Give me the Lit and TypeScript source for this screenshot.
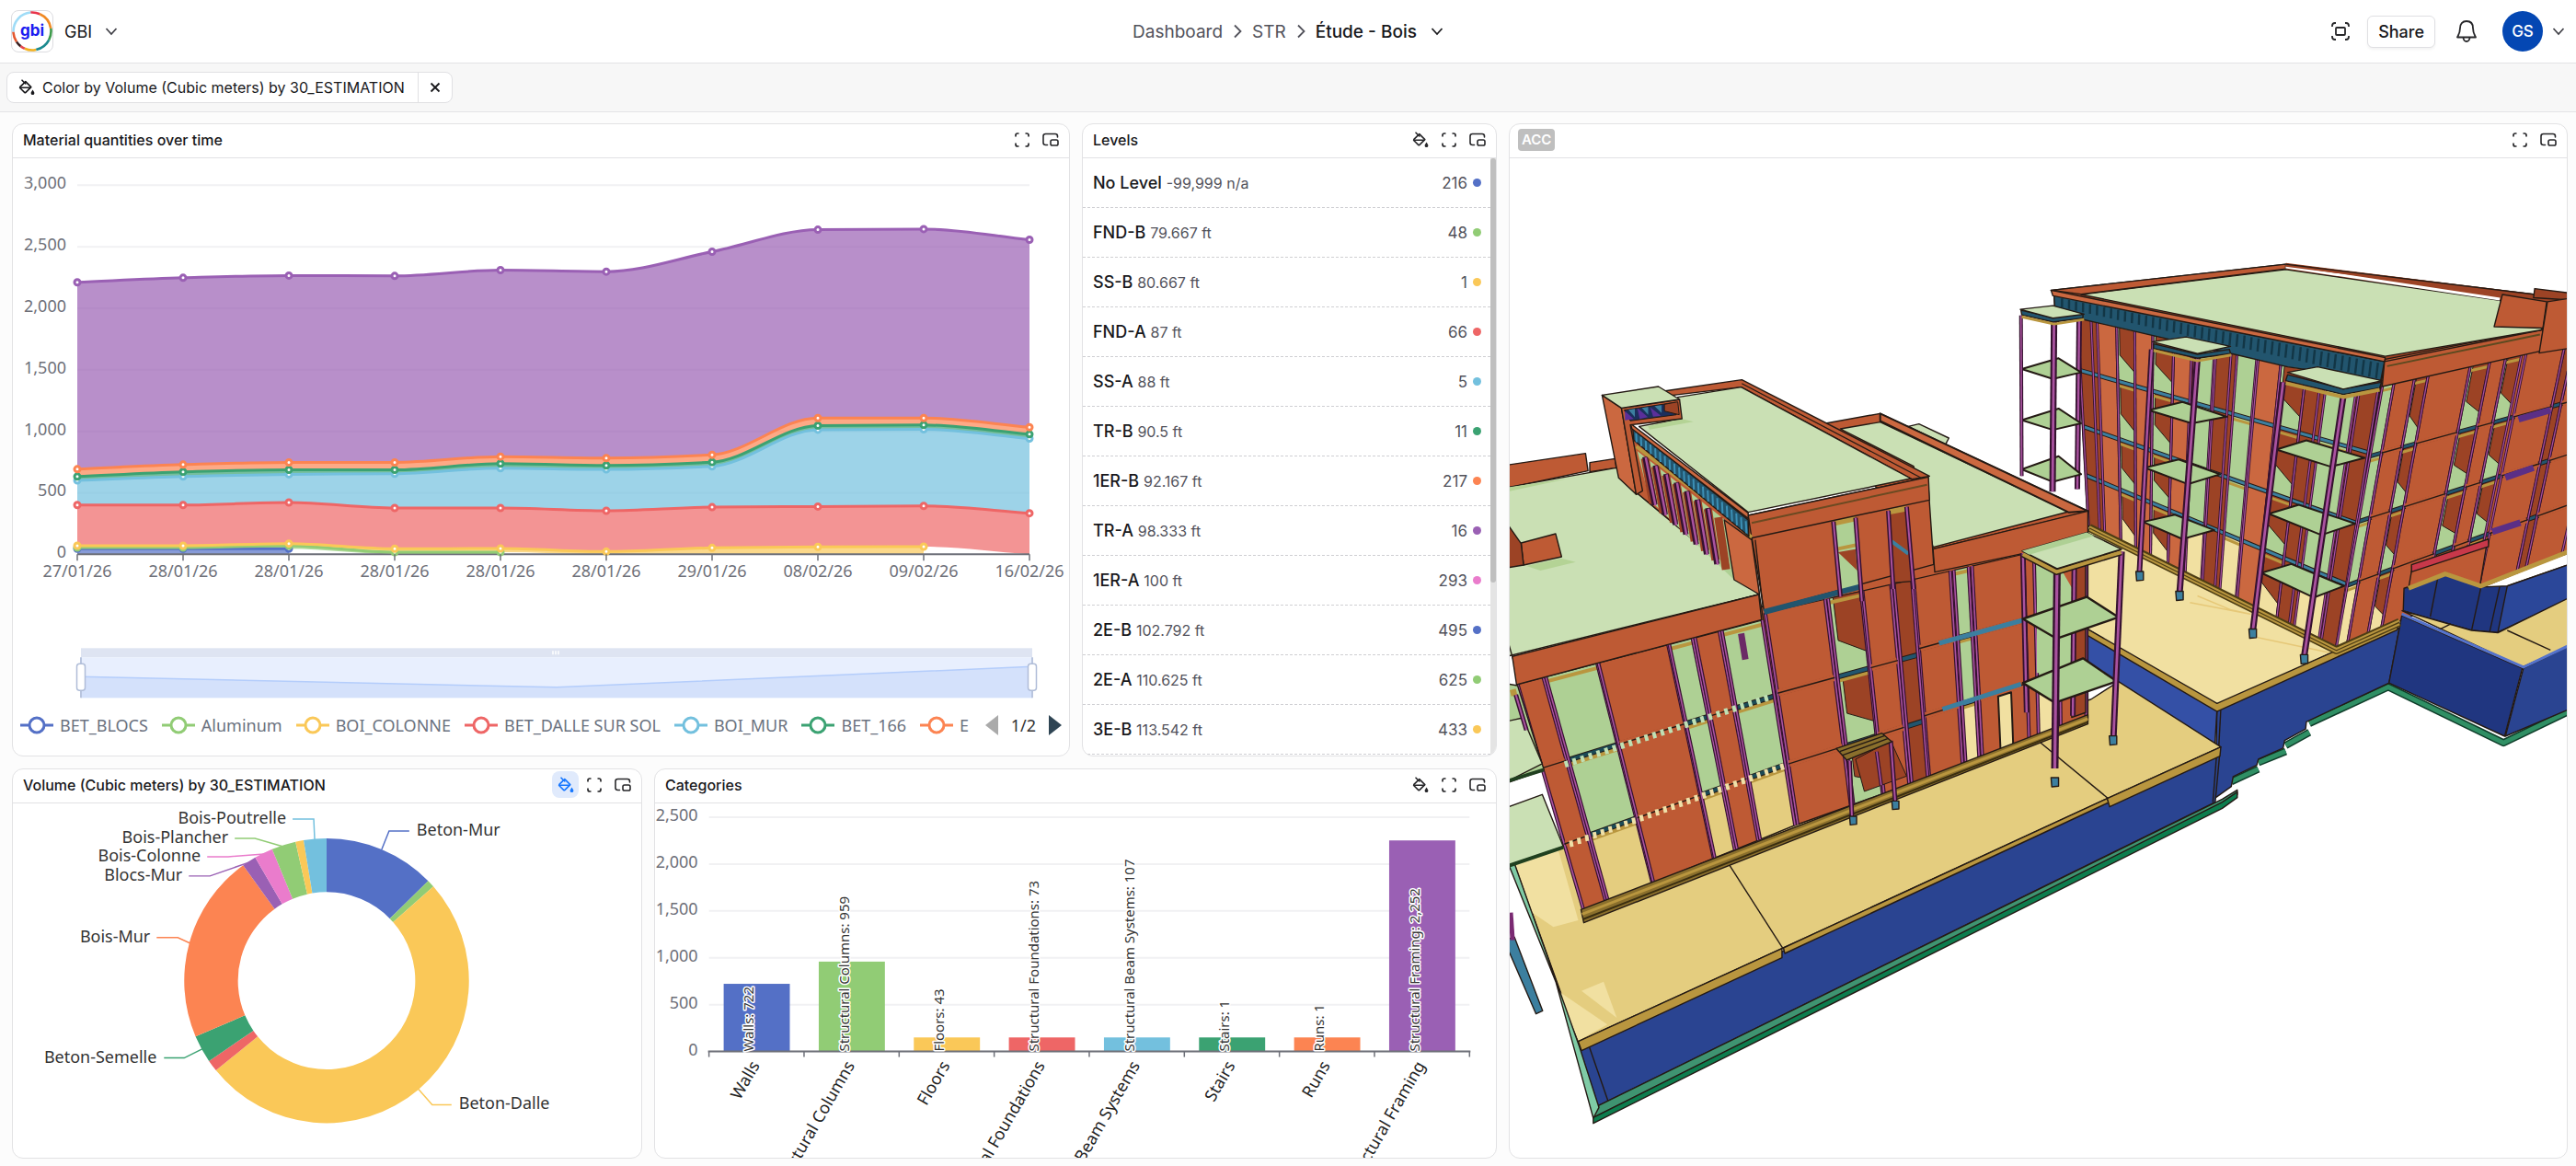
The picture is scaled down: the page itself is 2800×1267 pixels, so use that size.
import { LitElement, html, svg, css, nothing } from "lit";
import { customElement, property } from "lit/decorators.js";

type Pt = [number, number];

const C = {
  blue: "#5470c6",
  green: "#91cc75",
  yellow: "#fac858",
  red: "#ee6666",
  sky: "#73c0de",
  teal: "#3ba272",
  orange: "#fc8452",
  purple: "#9a60b4",
  pink: "#ea7ccc",
};

/* ---------- icons ---------- */

const bucketIcon = html`<svg class="icon" viewBox="0 0 18 18" aria-hidden="true">
  <g fill="none" stroke="currentColor" stroke-width="1.600" stroke-linejoin="round" stroke-linecap="round">
    <path d="M4 1.200 L7.800 5" />
    <path d="M7.800 2.600 L13.800 8.600 L8 14.400 Q7.300 15 6.600 14.400 L1.900 9.800 Q1.300 9.100 1.900 8.400 Z" />
    <path d="M2 9.300 H13.200" />
  </g>
  <path d="M15.500 11.500 C16.700 13.300 17.400 14.200 17.400 15.200 A1.900 1.900 0 0 1 13.600 15.200 C13.600 14.200 14.400 13.300 15.500 11.500 Z" fill="currentColor" />
</svg>`;

const expandIcon = html`<svg class="icon" viewBox="0 0 18 18" aria-hidden="true">
  <path d="M2 5.500 V4 Q2 2 4 2 H5.500 M12.500 2 H14 Q16 2 16 4 V5.500 M16 12.500 V14 Q16 16 14 16 H12.500 M5.500 16 H4 Q2 16 2 14 V12.500" fill="none" stroke="currentColor" stroke-width="1.700" />
</svg>`;

const pipIcon = html`<svg class="icon" viewBox="0 0 18 18" aria-hidden="true">
  <g fill="none" stroke="currentColor" stroke-width="1.600" stroke-linecap="round">
    <path d="M5.500 14.500 H3.500 Q1 14.500 1 12 V5 Q1 2.500 3.500 2.500 H14 Q16.500 2.500 16.500 5 V6" />
    <rect x="9" y="9" width="8" height="6" rx="1.800" />
  </g>
</svg>`;

const chevronDown = html`<svg class="chev" viewBox="0 0 14 14" aria-hidden="true">
  <path d="M1.500 4 L7 10 L12.500 4" fill="none" stroke="currentColor" stroke-width="1.700" />
</svg>`;

const chevronRight = html`<svg class="sep" viewBox="0 0 10 16" aria-hidden="true">
  <path d="M2 1.500 L8.500 8 L2 14.500" fill="none" stroke="currentColor" stroke-width="1.800" />
</svg>`;

/* ---------- panel ---------- */

@customElement("dash-panel")
class DashPanel extends LitElement {
  @property() heading = "";
  @property() badge = "";
  @property({ type: Boolean }) paint = false;
  @property({ type: Boolean }) active = false;

  static styles = css`
    :host {
      display: flex;
      flex-direction: column;
      min-width: 0;
      min-height: 0;
      box-sizing: border-box;
      background: #fff;
      border: 1px solid #e2e2e4;
      border-radius: 12px;
      overflow: hidden;
    }
    .head {
      display: flex;
      align-items: center;
      justify-content: space-between;
      height: 37px;
      box-sizing: border-box;
      padding: 0 6px 2px 11px;
      border-bottom: 1px solid #e2e2e4;
      flex: none;
    }
    .title {
      margin: 0;
      font: 500 16px/20px Inter, sans-serif;
      color: #18181b;
    }
    .badge {
      margin-left: -2px;
      padding: 0 4px;
      border-radius: 4px;
      background: #bfbfbf;
      color: #fff;
      font: 600 15px/24px Inter, sans-serif;
    }
    .tools {
      display: flex;
      gap: 2px;
    }
    .tool {
      display: grid;
      place-items: center;
      width: 29px;
      height: 29px;
      padding: 0;
      border: 0;
      border-radius: 8px;
      background: none;
      color: #27272a;
    }
    .tool.on {
      background: #e0eafc;
      color: #1677ff;
    }
    .icon {
      width: 18px;
      height: 18px;
      display: block;
    }
    .body {
      flex: 1;
      min-height: 0;
      display: flex;
      flex-direction: column;
    }
  `;

  render() {
    return html`
      <header class="head">
        ${this.badge
          ? html`<span class="badge">${this.badge}</span>`
          : html`<h2 class="title">${this.heading}</h2>`}
        <div class="tools">
          ${this.paint
            ? html`<button class="tool ${this.active ? "on" : ""}" aria-label="Color by">${bucketIcon}</button>`
            : nothing}
          <button class="tool" aria-label="Expand">${expandIcon}</button>
          <button class="tool" aria-label="Pop out">${pipIcon}</button>
        </div>
      </header>
      <div class="body"><slot></slot></div>
    `;
  }
}

/* ---------- area chart ---------- */

interface Series {
  name: string;
  color: string;
  top: number[];
}

const SERIES: Series[] = [
  { name: "BET_BLOCS", color: C.blue, top: [45, 45, 45] },
  { name: "Aluminum", color: C.green, top: [55, 55, 70, 17, 17] },
  { name: "BOI_COLONNE", color: C.yellow, top: [70, 70, 87, 45, 47, 22, 52, 60, 62] },
  { name: "BET_DALLE SUR SOL", color: C.red, top: [401, 401, 421, 376, 376, 354, 383, 388, 393, 334] },
  { name: "BOI_MUR", color: C.sky, top: [600, 632, 650, 655, 700, 690, 715, 1013, 1016, 941] },
  { name: "BET_166", color: C.teal, top: [632, 670, 687, 687, 737, 722, 749, 1046, 1051, 976] },
  { name: "E", color: C.orange, top: [692, 729, 747, 747, 794, 782, 809, 1108, 1108, 1033] },
  { name: "BOI_166", color: C.purple, top: [2211, 2248, 2266, 2263, 2310, 2298, 2460, 2639, 2644, 2557] },
];

const DATES = ["27/01/26", "28/01/26", "28/01/26", "28/01/26", "28/01/26", "28/01/26", "29/01/26", "08/02/26", "09/02/26", "16/02/26"];

/* Monotone cubic interpolation; returns only the curve commands after the first point. */
function curve(p: Pt[]): string {
  const n = p.length;
  const d: number[] = [];
  for (let i = 0; i < n - 1; i++) d.push((p[i + 1][1] - p[i][1]) / (p[i + 1][0] - p[i][0]));
  const m = p.map((_, i) => {
    if (i === 0) return d[0];
    if (i === n - 1) return d[n - 2];
    if (d[i - 1] * d[i] <= 0) return 0;
    return (2 * d[i - 1] * d[i]) / (d[i - 1] + d[i]);
  });
  let s = "";
  for (let i = 0; i < n - 1; i++) {
    const h = (p[i + 1][0] - p[i][0]) / 3;
    s += `C${p[i][0] + h},${p[i][1] + h * m[i]} ${p[i + 1][0] - h},${p[i + 1][1] - h * m[i + 1]} ${p[i + 1][0]},${p[i + 1][1]}`;
  }
  return s;
}

@customElement("area-chart")
class AreaChart extends LitElement {
  static styles = css`
    :host {
      flex: 1;
      min-height: 0;
      display: flex;
      flex-direction: column;
      padding-bottom: 16px;
      font-family: "Noto Sans", "Open Sans", sans-serif;
    }
    .plot {
      flex: 1;
      min-height: 0;
      width: 100%;
      display: block;
    }
    .tick {
      font-size: 18px;
      fill: #6e7079;
    }
    .legend {
      display: flex;
      align-items: center;
      height: 34px;
      padding: 0 8px;
      gap: 14px;
    }
    .items {
      flex: 1;
      min-width: 0;
      display: flex;
      gap: 15px;
      overflow: hidden;
    }
    .item {
      flex: none;
      display: flex;
      align-items: center;
      gap: 7px;
      padding: 0;
      border: 0;
      background: none;
      color: #6b7280;
      font: 18px/24px "Noto Sans", sans-serif;
    }
    .mark {
      width: 36px;
      height: 24px;
    }
    .pager {
      display: flex;
      align-items: center;
      gap: 14px;
      font-size: 18px;
      color: #333;
    }
    .page {
      display: block;
      padding: 0;
      border: 0;
      background: none;
      height: 22px;
    }
    .arrow {
      width: 14px;
      height: 22px;
      display: block;
    }
  `;

  render() {
    const x = (i: number) => 70 + i * 115;
    const y = (v: number) => 430 - (v * 401) / 3000;
    const base = (k: number, n: number): number[] =>
      Array.from({ length: n }, (_, i) => (k > 0 ? SERIES[k - 1].top[i] ?? 0 : 0));
    const pts = (vals: number[]): Pt[] => vals.map((v, i) => [x(i), y(v)]);
    return html`
      <svg class="plot" viewBox="0 0 1148 598" role="img" aria-label="Stacked material quantities">
        ${[0, 500, 1000, 1500, 2000, 2500, 3000].map(
          (v) => svg`
            <line x1="70" x2="1105" y1=${y(v)} y2=${y(v)} stroke="#f1f1f3" stroke-width="2" />
            <text class="tick" x="58" y=${y(v) + 4} text-anchor="end">${v.toLocaleString("en-US")}</text>`
        )}
        ${SERIES.map((s, k) => {
          const up = pts(s.top);
          const low = pts(base(k, s.top.length)).reverse();
          const first = `M${up[0][0]},${up[0][1]}`;
          return svg`<path fill=${s.color} opacity="0.7" d="${first}${curve(up)}L${low[0][0]},${low[0][1]}${curve(low)}Z" />`;
        })}
        <line x1="70" x2="1105" y1="430" y2="430" stroke="#6e7079" stroke-width="2" />
        ${SERIES.map((s) => {
          const up = pts(s.top);
          return svg`<path fill="none" stroke=${s.color} stroke-width="3" d="M${up[0][0]},${up[0][1]}${curve(up)}" />
            ${up.map((p) => svg`<circle cx=${p[0]} cy=${p[1]} r="3" fill="#fff" stroke=${s.color} stroke-width="3" />`)}`;
        })}
        ${DATES.map(
          (d, i) => svg`
            <line x1=${x(i)} x2=${x(i)} y1="430" y2="437" stroke="#6e7079" stroke-width="1.500" />
            <text class="tick" x=${x(i)} y="455" text-anchor="middle">${d}</text>`
        )}
        <rect x="74" y="532" width="1034" height="10" fill="#dee4f2" />
        <rect x="74" y="542" width="1034" height="44" fill="#e8effe" />
        <path d="M74 563 L591 574.500 L1108 552 V586 H74 Z" fill="#d4e1fb" />
        <path d="M74 563 L591 574.500 L1108 552" fill="none" stroke="#b4cdfb" stroke-width="1.500" />
        <path d="M587 535 v4 M590 535 v4 M593 535 v4" stroke="#fff" stroke-width="1.500" />
        ${[74, 1108].map(
          (h) => svg`
            <line x1=${h} x2=${h} y1="542" y2="586" stroke="#b9c5de" stroke-width="2" />
            <rect x=${h - 4.5} y="549" width="9" height="29" rx="3" fill="#fff" stroke="#b0bdd8" stroke-width="1.500" />`
        )}
      </svg>
      <div class="legend">
        <div class="items">
          ${SERIES.slice(0, 7).map(
            (s) => html`<button class="item">
              <svg class="mark" viewBox="0 0 36 24" aria-hidden="true">
                <line x1="0" x2="36" y1="12" y2="12" stroke=${s.color} stroke-width="3" />
                <circle cx="18" cy="12" r="8" fill="#fff" stroke=${s.color} stroke-width="3" />
              </svg>${s.name}
            </button>`
          )}
        </div>
        <div class="pager">
          <button class="page" aria-label="Previous">
            <svg class="arrow" viewBox="0 0 14 22"><path d="M14 0 V22 L0 11 Z" fill="#aaa" /></svg>
          </button>
          <span>1/2</span>
          <button class="page" aria-label="Next">
            <svg class="arrow" viewBox="0 0 14 22"><path d="M0 0 V22 L14 11 Z" fill="#2f4554" /></svg>
          </button>
        </div>
      </div>
    `;
  }
}

/* ---------- level list ---------- */

const LEVELS: [string, string, number, string][] = [
  ["No Level", "-99,999 n/a", 216, C.blue],
  ["FND-B", "79.667 ft", 48, C.green],
  ["SS-B", "80.667 ft", 1, C.yellow],
  ["FND-A", "87 ft", 66, C.red],
  ["SS-A", "88 ft", 5, C.sky],
  ["TR-B", "90.5 ft", 11, C.teal],
  ["1ER-B", "92.167 ft", 217, C.orange],
  ["TR-A", "98.333 ft", 16, C.purple],
  ["1ER-A", "100 ft", 293, C.pink],
  ["2E-B", "102.792 ft", 495, C.blue],
  ["2E-A", "110.625 ft", 625, C.green],
  ["3E-B", "113.542 ft", 433, C.yellow],
];

@customElement("level-list")
class LevelList extends LitElement {
  static styles = css`
    :host {
      flex: 1;
      min-height: 0;
      display: flex;
      font-family: Inter, sans-serif;
    }
    .rows {
      flex: 1;
      margin: 0;
      padding: 0;
      list-style: none;
      overflow: hidden;
    }
    .row {
      display: flex;
      align-items: center;
      gap: 6px;
      height: 54px;
      box-sizing: border-box;
      padding: 0 10px 0 11px;
      border-bottom: 1px dashed #cfcfd3;
    }
    .name {
      flex: 1;
      font-size: 18px;
      font-weight: 500;
      color: #18181b;
    }
    .elev {
      font-size: 16px;
      font-weight: 400;
      color: #52525b;
    }
    .count {
      font-size: 17px;
      color: #52525b;
    }
    .dot {
      width: 9px;
      height: 9px;
      border-radius: 50%;
    }
    .track {
      width: 6px;
      background: #e4e4e4;
    }
    .thumb {
      height: 71%;
      background: #bfbfbf;
      border-radius: 3px;
    }
  `;

  render() {
    return html`
      <ul class="rows">
        ${LEVELS.map(
          ([name, elev, count, color]) => html`<li class="row">
            <span class="name">${name} <span class="elev">${elev}</span></span>
            <span class="count">${count}</span>
            <span class="dot" style="background:${color}"></span>
          </li>`
        )}
      </ul>
      <div class="track"><div class="thumb"></div></div>
    `;
  }
}

/* ---------- donut ---------- */

const SLICES: [number, string][] = [
  [45.5, C.blue],
  [48.6, C.green],
  [231, C.yellow],
  [235.7, C.red],
  [247, C.teal],
  [324.1, C.orange],
  [329.9, C.purple],
  [337.5, C.pink],
  [347.4, C.green],
  [350.7, C.yellow],
  [360, C.sky],
];

const CALLOUTS: [string, string, string, number, number, string][] = [
  ["Beton-Mur", C.blue, "401,50 409,30 431,30", 439, 30, "start"],
  ["Beton-Dalle", C.yellow, "441,311 456,328 477,328", 485, 328, "start"],
  ["Beton-Semelle", C.teal, "206,267 186,277 164,277", 156, 277, "end"],
  ["Bois-Mur", C.orange, "192,152 179,146 156,146", 149, 146, "end"],
  ["Blocs-Mur", C.purple, "257,64 214,79 191,79", 184, 79, "end"],
  ["Bois-Colonne", C.pink, "273,55 234,58 211,58", 204, 58, "end"],
  ["Bois-Plancher", C.green, "294,47 263,38 241,38", 234, 38, "end"],
  ["Bois-Poutrelle", C.sky, "328,39 327,17 304,17", 297, 17, "end"],
];

@customElement("donut-chart")
class DonutChart extends LitElement {
  static styles = css`
    :host {
      flex: 1;
      min-height: 0;
      display: flex;
    }
    .plot {
      width: 100%;
      height: 100%;
    }
    .label {
      font: 18px "Noto Sans", sans-serif;
      fill: #333;
    }
  `;

  render() {
    const at = (a: number, r: number) => {
      const t = (a * Math.PI) / 180;
      return `${341 + r * Math.sin(t)} ${193 - r * Math.cos(t)}`;
    };
    return html`<svg class="plot" viewBox="0 0 683 386" role="img" aria-label="Volume by estimation">
      ${SLICES.map(([end, color], i) => {
        const start = i ? SLICES[i - 1][0] : 0;
        const big = end - start > 180 ? 1 : 0;
        return svg`<path fill=${color} d="M${at(start, 155)} A155 155 0 ${big} 1 ${at(end, 155)} L${at(end, 96.5)} A96.5 96.5 0 ${big} 0 ${at(start, 96.5)} Z" />`;
      })}
      ${CALLOUTS.map(
        ([name, color, line, tx, ty, anchor]) => svg`
          <polyline points=${line} fill="none" stroke=${color} stroke-width="1.500" />
          <text class="label" x=${tx} y=${ty + 5} text-anchor=${anchor}>${name}</text>`
      )}
    </svg>`;
  }
}

/* ---------- bar chart ---------- */

const BARS: [string, number, string][] = [
  ["Walls", 722, C.blue],
  ["Structural Columns", 959, C.green],
  ["Floors", 43, C.yellow],
  ["Structural Foundations", 73, C.red],
  ["Structural Beam Systems", 107, C.sky],
  ["Stairs", 1, C.teal],
  ["Runs", 1, C.orange],
  ["Structural Framing", 2252, C.purple],
];

@customElement("bar-chart")
class BarChart extends LitElement {
  static styles = css`
    :host {
      flex: 1;
      min-height: 0;
      display: flex;
    }
    .plot {
      width: 100%;
      height: 100%;
    }
    .tick {
      font: 18px "Noto Sans", sans-serif;
      fill: #6e7079;
    }
    .cat {
      font: 18px "Noto Sans", sans-serif;
      fill: #222;
    }
    .value {
      font: 15px "Noto Sans", sans-serif;
      fill: #333;
      stroke: #fff;
      stroke-width: 3px;
      paint-order: stroke;
      stroke-linejoin: round;
    }
  `;

  render() {
    const y = (v: number) => 270 - (v * 255) / 2500;
    const step = 103.5;
    return html`<svg class="plot" viewBox="0 0 914 386" role="img" aria-label="Elements per category">
      ${[0, 500, 1000, 1500, 2000, 2500].map(
        (v) => svg`
          <line x1="58" x2="886" y1=${y(v)} y2=${y(v)} stroke="#f1f1f3" stroke-width="2" />
          <text class="tick" x="46" y=${y(v) + 4} text-anchor="end">${v.toLocaleString("en-US")}</text>`
      )}
      ${BARS.map(([, v, color], i) => {
        const top = y(Math.max(v, 150));
        return svg`<rect x=${74 + i * step} y=${top} width="72" height=${270 - top} fill=${color} />`;
      })}
      <line x1="57" x2="887" y1="270" y2="270" stroke="#6e7079" stroke-width="2" />
      ${Array.from({ length: 9 }, (_, i) => svg`<line x1=${58 + i * step} x2=${58 + i * step} y1="270" y2="276" stroke="#6e7079" stroke-width="1.500" />`)}
      ${BARS.map(([name, v], i) => {
        const cx = 58 + (i + 0.5) * step;
        return svg`
          <text class="value" transform="translate(${cx - 3} 270) rotate(-90)">${name}: ${v.toLocaleString("en-US")}</text>
          <text class="cat" text-anchor="end" transform="translate(${cx + 4} 285) rotate(-60)">${name}</text>`;
      })}
    </svg>`;
  }
}

/* ---------- 3D model ---------- */

const M = {
  wall: "#be5a34",
  dark: "#9c4325",
  light: "#cb6840",
  roof: "#cae0b4",
  leaf: "#aed094",
  slab: "#e4cd7f",
  pale: "#f1e0a1",
  gold: "#b9963f",
  ochre: "#8a6f2c",
  blue: "#2a4491",
  navy: "#203680",
  beam: "#3c7f9f",
  steel: "#22556e",
  pink: "#a9529f",
  ink: "#241a14",
};

const poly = (fill: string, points: string, w = 1.4) =>
  svg`<polygon class="f" points=${points} fill=${fill} stroke=${M.ink} stroke-width=${w} />`;
const flat = (fill: string, points: string) => svg`<polygon points=${points} fill=${fill} />`;
const line = (points: string, stroke: string = M.ink, w = 1.4) =>
  svg`<polyline class="f" points=${points} fill="none" stroke=${stroke} stroke-width=${w} />`;
const post = (points: string, w = 5) =>
  svg`${line(points, "#35112f", w)}${line(points, M.pink, w * 0.4)}`;

type Quad = [Pt, Pt, Pt, Pt];

/* Bilinear position on a facade: u runs along it, v runs down it. */
function on(q: Quad, u: number, v: number): string {
  const mix = (k: 0 | 1) =>
    (1 - v) * ((1 - u) * q[0][k] + u * q[1][k]) + v * ((1 - u) * q[3][k] + u * q[2][k]);
  return `${mix(0).toFixed(1)},${mix(1).toFixed(1)}`;
}

interface Bay {
  u0: number;
  u1: number;
  fill: string;
  last?: string;
  /* A recess shows the room behind it: a dark wall over a floor slab. */
  recess?: boolean;
}

const bay = (u0: number, u1: number, fill: string, last?: string): Bay => ({ u0, u1, fill, last });
const recess = (u0: number, u1: number, fill: string, last?: string): Bay => ({ u0, u1, fill, last, recess: true });

function facade(q: Quad, floors: number[], bays: Bay[], beam: string, thin = false) {
  const edges = [0, ...floors, 1];
  const solid = (b: Bay) => b.fill === M.wall || b.fill === M.light || b.fill === M.dark;
  const w = thin ? 3 : 4;
  return svg`
    ${bays.map((b) =>
      edges.slice(0, -1).map((v0, i) => {
        const v1 = edges[i + 1];
        const isLast = i === edges.length - 2;
        const fill = isLast && b.last ? b.last : b.fill;
        const h = v1 - v0;
        const um = b.u0 + (b.u1 - b.u0) * 0.15;
        return svg`${poly(fill, [on(q, b.u0, v0), on(q, b.u1, v0), on(q, b.u1, v1), on(q, b.u0, v1)].join(" "), 1.2)}
          ${b.recess
            ? poly(M.dark, [on(q, um, v0), on(q, b.u1, v0), on(q, b.u1, v1 - h * 0.22), on(q, um, v1 - h * 0.45)].join(" "), 1)
            : nothing}
          ${solid(b) ? nothing : line(`${on(q, b.u0, v0 + 0.02)} ${on(q, b.u1, v0 + 0.02)}`, M.gold, w)}`;
      })
    )}
    ${floors.map(
      (v) => svg`${line(`${on(q, 0, v)} ${on(q, 1, v)}`, M.ink, w + 2)}
        ${line(`${on(q, 0, v)} ${on(q, 1, v)}`, beam, w)}`
    )}
    ${bays.map((b) => svg`${post(`${on(q, b.u0, 0)} ${on(q, b.u0, 1)}`, w)}${post(`${on(q, b.u1, 0)} ${on(q, b.u1, 1)}`, w)}`)}
    ${floors.map((v) =>
      bays.map((b) =>
        b.fill === M.wall
          ? svg`${line(`${on(q, b.u0 + 0.006, v)} ${on(q, b.u1 - 0.006, v)}`, M.wall, w + 3)}${line(`${on(q, b.u0, v)} ${on(q, b.u1, v)}`, M.ink, 1.4)}`
          : nothing
      )
    )}
  `;
}

const balcony = (slabs: string[]) => slabs.map((s) => poly(M.leaf, s, 2));
const foot = (x: number, y: number) =>
  poly(M.beam, `${x - 10},${y - 14} ${x + 10},${y - 14} ${x + 10},${y + 12} ${x - 8},${y + 14}`, 1.4);

const EAST: Quad = [[240, 225], [1045, 430], [930, 1240], [270, 870]];
const NORTH: Quad = [[1053, 445], [1660, 290], [1530, 960], [930, 1240]];
const FRONT_A: Quad = [[25, 1030], [720, 822], [813, 1490], [213, 1770]];
const FRONT_B: Quad = [[720, 800], [1145, 690], [1190, 1335], [813, 1490]];
const FRONT_C: Quad = [[1145, 690], [1640, 560], [1640, 1150], [1190, 1335]];

function ribs(a: Pt, b: Pt, c: Pt, d: Pt, n: number, stroke: string, w: number) {
  return Array.from({ length: n }, (_, i) => {
    const t = (i + 0.5) / n;
    const p = `${a[0] + (b[0] - a[0]) * t},${a[1] + (b[1] - a[1]) * t}`;
    const r = `${c[0] + (d[0] - c[0]) * t},${c[1] + (d[1] - c[1]) * t}`;
    return line(`${p} ${r}`, stroke, w);
  });
}

const footing = (points: string) => svg`${line(points, "#0f3d2a", 8)}${line(points, "#2f8f64", 5)}`;

const farBuilding = svg`<g transform="translate(2160 260) scale(0.40816 0.35714)">
  ${footing("1560,1430 1375,1532 1068,1362 858,1473")}
  ${footing("795,1540 858,1500")}
  ${footing("722,1592 795,1558")}
  ${footing("650,1650 722,1612")}
  ${poly(M.blue, "612,1430 1098,1182 1070,1350 850,1468 848,1490 792,1525 788,1548 722,1582 718,1600 655,1635 650,1665 607,1700")}
  ${poly("#3450a6", "255,1190 612,1430 606,1545 345,1352 255,1290")}
  ${line("622,1432 616,1560")}
  ${poly(M.pale, "270,870 930,1250 1095,1165 612,1418 250,1175 200,980")}
  ${line("540,1105 700,1140 650,1128 560,1085", "#e6c878", 1.5)}
  ${line("720,1212 930,1262", "#e6c878", 1.5)}
  ${poly(M.gold, "255,1178 612,1412 1095,1168 1092,1188 612,1437 255,1197")}
  ${poly(M.dark, "170,155 795,76 1545,180 1545,300 1060,375")}
  ${poly(M.wall, "178,170 1060,365 930,1250 268,872 240,300 180,210")}
  ${poly(M.wall, "1060,365 1480,272 1640,230 1560,950 1310,1055 1110,1065 1098,1160 930,1250")}
  ${flat(M.dark, "240,235 1045,440 930,1240 270,870")}
  ${facade(
    EAST,
    [0.27, 0.535, 0.765],
    [
      bay(0, 0.045, M.dark),
      bay(0.065, 0.13, M.light),
      recess(0.13, 0.19, M.leaf, M.pale),
      bay(0.19, 0.25, M.light),
      recess(0.25, 0.32, M.leaf, M.pale),
      bay(0.32, 0.38, M.light),
      bay(0.39, 0.455, M.leaf, M.pale),
      bay(0.46, 0.51, M.dark),
      bay(0.53, 0.595, M.leaf, M.pale),
      bay(0.6, 0.675, M.light),
      recess(0.675, 0.76, M.leaf, M.pale),
      bay(0.76, 0.81, M.dark),
      bay(0.83, 0.93, M.leaf, M.pale),
      bay(0.94, 1, M.dark),
    ],
    M.beam,
    true
  )}
  ${facade(
    NORTH,
    [0.27, 0.52, 0.765],
    [
      bay(0, 0.05, M.leaf, M.pale),
      bay(0.05, 0.14, M.wall),
      recess(0.14, 0.2, M.leaf, M.pale),
      bay(0.2, 0.385, M.wall),
      recess(0.385, 0.47, M.leaf),
      bay(0.47, 0.54, M.wall),
      recess(0.54, 0.61, M.leaf),
      bay(0.63, 0.8, M.wall),
      bay(0.8, 0.84, M.dark),
      bay(0.84, 1, M.wall),
    ],
    M.steel,
    true
  )}
  ${line("1415,548 1500,520", "#5b2f86", 7)}
  ${line("1380,725 1455,695", "#5b2f86", 7)}
  ${line("1345,890 1420,862", "#5b2f86", 7)}
  ${poly(M.steel, "178,170 1058,372 1048,430 800,388 640,345 240,240 180,205")}
  ${ribs([190, 178], [1050, 378], [190, 205], [1045, 425], 46, "#123646", 2.4)}
  ${poly(M.wall, "1058,372 1480,275 1475,340 1052,448")}
  ${line("1065,386 1472,290", "#5c4a20", 2)}
  ${poly(M.light, "170,155 1060,360 1058,372 175,172")}
  ${poly(M.roof, "250,168 795,92 1365,186 1480,275 1060,356")}
  ${poly(M.wall, "172,155 795,76 795,90 250,167")}
  ${line("795,84 1365,182", "#fff", 3)}
  ${line("795,78 1460,172", M.dark, 4)}
  ${line("795,76 1460,168")}
  ${poly(M.wall, "1372,168 1490,190 1480,270 1350,266")}
  ${poly(M.dark, "1458,150 1560,165 1560,185 1455,178")}
  ${poly(M.wall, "1492,190 1560,178 1560,330 1470,346")}
  ${poly(M.navy, "1110,1062 1220,1022 1315,1058 1385,1055 1560,985 1560,1090 1360,1197 1290,1190 1108,1130")}
  ${poly("#2b4799", "1385,1055 1560,985 1560,1090 1360,1195")}
  ${line("1200,1030 1180,1148")}${line("1315,1058 1290,1190")}${line("1365,1056 1338,1195")}
  ${poly(M.wall, "1130,1010 1330,930 1312,1055 1222,1015 1122,1062")}
  ${poly("#c8384a", "1130,990 1335,912 1335,935 1130,1012")}
  ${line("1122,1062 1220,1018 1315,1055 1560,945", M.gold, 5)}
  ${poly(M.slab, "1105,1130 1290,1190 1360,1197 1560,1085 1560,1232 1425,1302")}
  ${line("1385,1190 1500,1250")}${line("1200,1190 1235,1170")}
  ${poly(M.navy, "1104,1145 1425,1305 1378,1512 1070,1350")}
  ${poly(M.blue, "1428,1305 1560,1232 1560,1425 1380,1512")}
  ${line("1104,1140 1428,1302 1560,1230", "#5573cc", 3)}
  ${line("272,878 930,1250 1098,1165", "#4d3d14", 9)}
  ${line("272,874 930,1246 1098,1160", M.gold, 2)}
  ${line("272,884 930,1256 1098,1171", M.gold, 2)}

  ${flat("#ffffff", "92,245 240,245 240,740 92,700")}
  ${post("245,240 240,760", 6)}
  ${balcony(["92,395 190,362 250,405 175,425", "92,550 190,515 250,560 175,580", "92,700 190,660 250,715 175,738"])}
  ${post("90,232 92,720", 4)}${post("178,250 174,768", 7)}
  ${poly(M.steel, "90,216 175,238 255,228 255,240 175,252 92,230")}
  ${line("92,236 178,258 258,244", M.gold, 3)}
  ${poly(M.roof, "88,213 175,202 258,228 175,240")}

  ${balcony(["430,520 520,495 638,540 545,560", "420,695 510,670 620,715 535,745", "415,860 500,838 605,885 520,912"])}
  ${post("438,335 405,1020", 6)}${post("560,360 512,1080", 7)}
  ${poly(M.steel, "443,318 560,350 645,335 648,348 560,362 443,332")}
  ${line("443,338 560,370 650,352", M.gold, 3)}
  ${poly(M.roof, "440,312 530,297 648,326 560,348")}
  ${foot(406, 1025)}${foot(512, 1085)}

  ${balcony(["770,640 850,612 1005,665 915,692", "750,835 830,808 980,865 890,900", "730,1015 810,988 950,1055 870,1090"])}
  ${post("788,435 707,1195", 7)}${post("948,480 844,1270", 7)}
  ${poly(M.steel, "800,412 948,455 1050,435 1045,452 948,472 795,430")}
  ${line("795,438 948,480 1045,458", M.gold, 4)}
  ${poly(M.roof, "800,405 880,388 1052,430 948,456")}
  ${foot(707, 1200)}${foot(844, 1278)}
</g>`;

const terrace = svg`<g transform="translate(1640 800) scale(0.5102 0.33333)">
  ${poly(M.blue, "150,1015 585,700 1275,215 1515,50 1505,215 190,1205")}
  ${line("1508,60 1500,215")}${line("172,1015 212,1192")}
  ${poly("#3f9471", "190,1205 1520,205 1552,175 1552,190 1520,222 180,1243")}
  ${poly("#0d7d4e", "180,1243 1520,215 1552,182 1552,200 1520,235 180,1262")}
  ${poly(M.slab, "12,415 110,360 1240,-120 1299,-178 1517,35 1275,203 585,690 148,995")}
  ${flat(M.pale, "14,418 105,368 148,600 95,622 50,575")}
  ${flat(M.pale, "105,830 148,992 210,940")}
  ${flat(M.pale, "155,830 202,800 230,918")}
  ${poly(M.gold, "148,995 582,692 582,722 155,1025")}
  ${poly(M.gold, "585,690 1275,203 1278,216 588,708")}
  ${poly(M.gold, "1275,203 1517,35 1515,65 1280,230")}
  ${line("468,415 584,692")}${line("1128,15 1277,203")}
  ${poly("#7fcba6", "0,420 12,415 150,1010 192,1210 180,1245 100,800")}
  ${poly(M.beam, "0,660 12,655 72,895 58,905 0,700")}
  ${line("4,575 8,665", "#7a2a72", 5)}
</g>`;

const nearBuilding = svg`<g transform="translate(1640 400) scale(0.38265 0.33333)">
  ${poly(M.roof, "1135,190 1165,182 1250,228 1240,250")}
  ${poly(M.wall, "900,180 1055,148 1645,466 1640,480 1205,600 900,200")}
  ${poly(M.roof, "942,198 1055,176 1590,468 1205,584 1150,320")}
  ${poly(M.light, "1055,148 1645,466 1590,470 1055,172", 2)}
  ${poly(M.wall, "1150,560 1205,590 1645,468 1645,1150 1190,1340 813,1490 715,780")}
  ${facade(
    FRONT_C,
    [0.35, 0.69],
    [
      bay(0.01, 0.22, M.wall),
      bay(0.24, 0.325, M.leaf, M.pale),
      bay(0.345, 0.64, M.wall),
      bay(0.7, 0.82, M.leaf, M.pale),
      bay(0.84, 1, M.wall),
    ],
    M.beam
  )}
  ${poly(M.pale, [on(FRONT_C, 0.46, 0.71), on(FRONT_C, 0.54, 0.71), on(FRONT_C, 0.54, 0.99), on(FRONT_C, 0.46, 0.99)].join(" "), 2)}
  ${line("1222,897 1460,822", M.beam, 5)}${line("1232,1112 1455,1030", M.beam, 5)}
  ${poly(M.wall, "1205,590 1645,466 1645,560 1210,665")}

  ${facade(
    FRONT_B,
    [0.38, 0.715],
    [
      bay(0.02, 0.42, M.wall),
      recess(0.44, 0.66, M.leaf),
      bay(0.67, 0.86, M.wall),
      bay(0.88, 1, M.dark),
    ],
    M.steel
  )}

  ${poly(M.wall, "680,480 1190,355 1207,640 725,790")}
  ${poly(M.leaf, "925,500 985,487 1000,715 940,735")}
  ${flat(M.dark, "935,600 985,590 990,660")}
  ${line("925,505 985,490", M.gold, 6)}${line("932,590 985,577", M.gold, 4)}
  ${poly(M.dark, "1082,465 1130,455 1145,695 1090,700")}
  ${line("1082,468 1130,458", M.gold, 6)}
  ${line("1088,565 1135,605", M.beam, 4)}
  ${line("725,795 1000,712", M.steel, 6)}
  ${line("700,560 722,780")}
  ${post("922,500 942,745", 5)}${post("985,488 1003,760", 5)}${post("1078,465 1092,720", 5)}${post("1130,452 1150,720", 5)}
  ${poly(M.wall, "680,480 1192,355 1195,430 685,555")}
  ${line("690,505 1188,380", "#6b4a22", 2)}

  ${poly(M.wall, "0,390 0,315 218,278 225,335")}
  ${poly(M.wall, "230,308 302,295 305,325 230,338")}
  ${poly(M.roof, "0,388 305,325 365,408 710,738 0,938")}
  ${flat("#b4d395", "0,388 260,345 160,362 0,402")}
  ${poly(M.wall, "35,570 133,540 150,615 42,642")}
  ${poly(M.dark, "0,515 35,572 42,642 0,650")}
  ${flat("#b4d395", "50,645 150,620 190,632 90,660")}

  ${poly(M.wall, "340,185 680,480 690,555 712,738 365,408")}
  ${flat(M.leaf, "365,270 620,500 640,690 400,430")}
  ${ribs([372, 280], [610, 500], [395, 425], [632, 672], 8, M.dark, 9)}
  ${ribs([372, 275], [580, 470], [400, 430], [606, 655], 7, "#35112f", 6)}
  ${ribs([374, 277], [582, 472], [402, 432], [608, 657], 7, M.pink, 2.5)}
  ${line("362,255 620,480 690,552", M.gold, 4)}
  ${poly(M.steel, "352,195 680,495 682,548 355,235")}
  ${ribs([355, 205], [680, 505], [356, 235], [682, 545], 24, "#3c8fb5", 2)}
  ${poly(M.light, "612,495 690,560 712,738 640,690")}
  ${poly(M.light, "345,180 680,472 680,490 350,198")}
  ${poly(M.wall, "440,75 662,38 1195,352 1145,362 660,62 440,92")}
  ${line("662,50 1170,357", M.ink, 1.2)}
  ${poly(M.roof, "370,190 490,165 480,95 660,62 1142,360 680,470")}
  ${flat("#b4d395", "395,190 490,165 525,175 400,200")}
  ${poly(M.light, "265,88 320,130 362,412 312,358")}
  ${poly(M.wall, "320,130 485,102 492,165 345,185 380,400 362,412")}
  ${poly("#1c2f5c", "328,137 472,112 476,152 345,172", 1)}
  ${flat("#5b2f9a", "330,170 330,140 355,166")}${flat("#5b2f9a", "365,130 395,160 372,166")}${flat("#5b2f9a", "402,128 432,155 410,158")}
  ${flat(M.beam, "340,136 358,133 358,160")}${flat(M.beam, "378,130 396,127 396,152")}${flat(M.beam, "414,124 434,121 434,146")}
  ${poly(M.dark, "442,118 480,110 484,152 442,140", 1)}
  ${poly(M.roof, "265,88 425,60 485,102 320,130")}

  ${poly(M.wall, "10,940 712,738 812,1490 213,1775")}
  ${facade(
    FRONT_A,
    [0.37, 0.705],
    [
      bay(0, 0.105, M.wall),
      bay(0.115, 0.325, M.leaf, M.slab),
      bay(0.33, 0.615, M.wall),
      bay(0.62, 0.715, M.leaf, M.slab),
      bay(0.725, 0.825, M.wall),
      bay(0.835, 1, M.leaf, M.slab),
    ],
    "#1b4a56"
  )}
  ${ribs([150, 1285], [740, 1062], [155, 1305], [745, 1082], 26, "#bfe0b4", 4)}
  ${ribs([165, 1545], [785, 1285], [168, 1565], [790, 1305], 28, "#efe0a8", 4)}
  ${line("660,865 672,950", "#6b2a66", 7)}
  ${poly(M.wall, "10,940 710,738 718,820 22,1032")}
  ${line("10,940 0,900")}
  ${poly(M.leaf, "0,1030 25,1035 100,1310 0,1350")}
  ${poly(M.roof, "0,1150 40,1140 95,1290 0,1345")}
  ${poly(M.roof, "0,1430 95,1390 155,1560 0,1620")}
  ${line("0,1345 98,1310", "#20401f", 4)}${line("0,1622 155,1562", "#20401f", 4)}
  ${line("5,1060 22,1055", M.gold, 7)}
  ${post("20,1065 50,1180", 5)}

  ${poly(M.ochre, "205,1765 1645,1130 1645,1160 213,1808")}
  ${line("208,1780 1645,1143", M.gold, 3)}${line("210,1797 1645,1154", "#3a2e10", 2)}

  ${poly(M.dark, "985,1275 1085,1215 1130,1330 1010,1380", 1)}
  ${post("968,1280 975,1470", 5)}${post("1085,1215 1098,1420", 5)}${post("1045,1250 1058,1360", 4)}
  ${poly(M.ochre, "930,1240 1060,1190 1088,1218 960,1278")}
  ${line("940,1250 1068,1198")}${line("948,1262 1076,1208")}
  ${foot(978, 1475)}${foot(1098, 1425)}
</g>`;

const frontTower = svg`<g transform="translate(2160 260) scale(0.40816 0.35714)">
  ${flat(M.leaf, "132,1005 195,1000 225,1060 225,1300 132,1320")}
  ${poly(M.dark, "232,990 262,975 262,1440 225,1455")}
  ${post("95,955 105,1440", 6)}${post("232,990 228,1450", 6)}
  ${poly(M.leaf, "95,1155 265,1088 350,1150 185,1215", 2.4)}
  ${poly(M.leaf, "95,1350 255,1275 345,1345 180,1410", 2.4)}
  ${post("358,950 336,1520", 7)}${post("186,1005 180,1610", 8)}
  ${line("95,958 185,1012 357,952", M.ink, 7)}${line("95,958 185,1012 357,952", M.gold, 4)}
  ${poly(M.roof, "93,948 265,892 358,943 186,1002")}
  ${flat(M.leaf, "93,948 265,892 285,902 112,960")}
  ${foot(335, 1525)}${foot(180, 1652)}
</g>`;

@customElement("model-view")
class ModelView extends LitElement {
  static styles = css`
    :host {
      flex: 1;
      min-height: 0;
      display: flex;
    }
    .scene {
      width: 100%;
      height: 100%;
    }
    .f {
      vector-effect: non-scaling-stroke;
      stroke-linejoin: round;
    }
  `;

  render() {
    return html`<svg class="scene" viewBox="1641 172 1149 1086" preserveAspectRatio="xMidYMid slice" role="img" aria-label="Building model">
      ${farBuilding} ${terrace} ${nearBuilding} ${frontTower}
    </svg>`;
  }
}

/* ---------- page ---------- */

@customElement("app-root")
class AppRoot extends LitElement {
  static styles = css`
    :host {
      display: flex;
      flex-direction: column;
      height: 100vh;
      background: #fcfcfc;
      font-family: Inter, sans-serif;
      color: #18181b;
    }
    .top {
      display: grid;
      grid-template-columns: 1fr auto 1fr;
      align-items: center;
      height: 69px;
      box-sizing: border-box;
      padding: 0 12px;
      background: #fff;
      border-bottom: 1px solid #e2e2e4;
      flex: none;
      font-size: 18px;
    }
    .brand,
    .crumbs,
    .actions {
      display: flex;
      align-items: center;
    }
    .brand {
      gap: 12px;
    }
    .logo {
      width: 46px;
      height: 46px;
      box-sizing: border-box;
      border: 1px solid #dcdce0;
      border-radius: 8px;
    }
    .mark {
      display: block;
      width: 44px;
      height: 44px;
    }
    .word {
      font: 700 17px Inter, sans-serif;
      fill: #1b1bf0;
    }
    .plain {
      display: flex;
      align-items: center;
      gap: 14px;
      padding: 0;
      border: 0;
      background: none;
      font: inherit;
      color: inherit;
    }
    .chev {
      width: 14px;
      height: 14px;
      color: #3f3f46;
    }
    .crumbs {
      gap: 11px;
      font-size: 19px;
    }
    .crumb {
      color: #52525b;
      text-decoration: none;
    }
    .here {
      gap: 15px;
      font-weight: 500;
    }
    .here .chev {
      color: #18181b;
    }
    .sep {
      width: 10px;
      height: 16px;
      color: #52525b;
    }
    .actions {
      justify-content: flex-end;
      gap: 18px;
    }
    .glyph {
      width: 22px;
      height: 22px;
      display: block;
    }
    .bell {
      width: 24px;
      height: 26px;
      display: block;
    }
    .share {
      height: 35px;
      margin-right: 4px;
      padding: 0 11px;
      border: 1px solid #e0e0e3;
      border-radius: 6px;
      background: #fff;
      box-shadow: 0 2px 3px #0000000d;
      font: 500 18px Inter, sans-serif;
      color: #18181b;
    }
    .user {
      gap: 10px;
      margin-left: 9px;
    }
    .avatar {
      display: grid;
      place-items: center;
      width: 44px;
      height: 44px;
      border-radius: 50%;
      background: #0447b3;
      color: #fff;
      font-size: 17px;
      font-weight: 500;
    }
    .filters {
      display: flex;
      align-items: center;
      height: 53px;
      box-sizing: border-box;
      padding: 0 7px;
      background: #f7f7f7;
      border-bottom: 1px solid #e4e4e6;
      flex: none;
    }
    .chip {
      display: flex;
      align-items: stretch;
      height: 34px;
      box-sizing: border-box;
      border: 1px solid #e0e0e3;
      border-radius: 8px;
      background: #fff;
      font-size: 16px;
    }
    .chip-main {
      gap: 8px;
      padding: 0 14px 0 12px;
      border-right: 1px solid #e0e0e3;
    }
    .chip-close {
      padding: 0 12px;
    }
    .icon {
      width: 18px;
      height: 18px;
    }
    .x {
      width: 12px;
      height: 12px;
    }
    .board {
      flex: 1;
      min-height: 0;
      display: grid;
      grid-template-columns: 1614fr 1151fr;
      gap: 13px;
      padding: 12px 9px 8px 13px;
    }
    .left {
      display: grid;
      grid-template-rows: 687fr 424fr;
      gap: 13px;
      min-width: 0;
      min-height: 0;
    }
    .row {
      display: grid;
      gap: 13px;
      min-height: 0;
    }
    .upper {
      grid-template-columns: 1150fr 451fr;
    }
    .lower {
      grid-template-columns: 685fr 916fr;
    }
  `;

  render() {
    const ring: [string, number, number][] = [
      ["#e8334a", 0, 8],
      ["#f08a24", 8, 16],
      ["#3d9a4a", 24, 10],
      ["#1b8a8f", 34, 14],
      ["#f2b01e", 48, 10],
      ["#e5484d", 58, 4],
      ["#3a2020", 62, 5],
      ["#e4572e", 67, 9],
      ["#9fdcf7", 76, 24],
    ];
    return html`
      <header class="top">
        <div class="brand">
          <div class="logo">
            <svg class="mark" viewBox="0 0 44 44" aria-hidden="true">
              ${ring.map(
                ([c, from, len]) => svg`<circle cx="22" cy="22" r="20.500" fill="none" stroke=${c} stroke-width="2.600"
                  pathLength="100" stroke-dasharray="${len} 100" stroke-dashoffset=${-from} transform="rotate(-95 22 22)" />`
              )}
              <text class="word" x="22" y="27" text-anchor="middle">gbi</text>
            </svg>
          </div>
          <button class="plain">GBI ${chevronDown}</button>
        </div>
        <nav class="crumbs">
          <a class="crumb" href="#">Dashboard</a>${chevronRight}
          <a class="crumb" href="#">STR</a>${chevronRight}
          <button class="plain here">Étude - Bois ${chevronDown}</button>
        </nav>
        <div class="actions">
          <button class="plain" aria-label="Present">
            <svg class="glyph" viewBox="0 0 22 22">
              <g fill="none" stroke="#27272a" stroke-width="1.800">
                <path d="M2 6 V5 Q2 2 5 2 H6 M16 2 H17 Q20 2 20 5 V6 M20 16 V17 Q20 20 17 20 H16 M6 20 H5 Q2 20 2 17 V16" />
                <rect x="6" y="7" width="10" height="8" rx="1" />
              </g>
            </svg>
          </button>
          <button class="share">Share</button>
          <button class="plain" aria-label="Notifications">
            <svg class="bell" viewBox="0 0 24 26">
              <g fill="none" stroke="#27272a" stroke-width="1.800" stroke-linejoin="round">
                <path d="M12 2 C7.500 2 5 5 5 9.500 C5 14.500 3.500 16.500 2 19.500 H22 C20.500 16.500 19 14.500 19 9.500 C19 5 16.500 2 12 2 Z" />
                <path d="M8.500 20 Q9 24 12 24 Q15 24 15.500 20" />
              </g>
            </svg>
          </button>
          <button class="plain user"><span class="avatar">GS</span>${chevronDown}</button>
        </div>
      </header>
      <div class="filters">
        <div class="chip">
          <button class="plain chip-main">${bucketIcon}Color by Volume (Cubic meters) by 30_ESTIMATION</button>
          <button class="plain chip-close" aria-label="Clear">
            <svg class="x" viewBox="0 0 12 12"><path d="M1.500 1.500 L10.500 10.500 M10.500 1.500 L1.500 10.500" stroke="#18181b" stroke-width="1.800" /></svg>
          </button>
        </div>
      </div>
      <main class="board">
        <div class="left">
          <div class="row upper">
            <dash-panel heading="Material quantities over time"><area-chart></area-chart></dash-panel>
            <dash-panel heading="Levels" paint><level-list></level-list></dash-panel>
          </div>
          <div class="row lower">
            <dash-panel heading="Volume (Cubic meters) by 30_ESTIMATION" paint active><donut-chart></donut-chart></dash-panel>
            <dash-panel heading="Categories" paint><bar-chart></bar-chart></dash-panel>
          </div>
        </div>
        <dash-panel badge="ACC"><model-view></model-view></dash-panel>
      </main>
    `;
  }
}
